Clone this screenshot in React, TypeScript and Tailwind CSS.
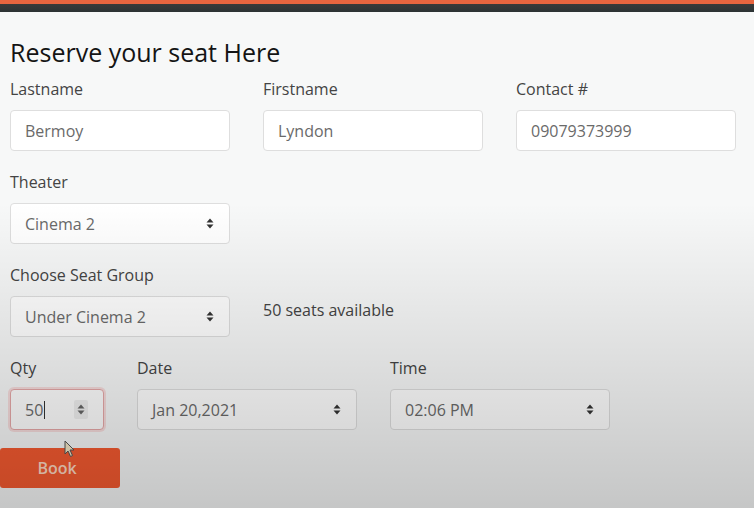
import React from "react";

const font = { fontFamily: '"Open Sans", "Noto Sans", Arial, sans-serif' };

function Arrows({ color = "#333" }: { color?: string }) {
  return (
    <svg width="8" height="11" viewBox="0 0 8 11" fill={color}>
      <path d="M4 0.5 L7.5 4.5 L0.5 4.5 Z" />
      <path d="M4 10.5 L7.5 6.5 L0.5 6.5 Z" />
    </svg>
  );
}

function TextBox({ value, w = "w-[220px]" }: { value: string; w?: string }) {
  return (
    <div
      className={`${w} h-[41px] bg-white border border-[#dedede] rounded-[4px] flex items-center pl-[14px] text-[16px] text-[#6a6a6a]`}
    >
      {value}
    </div>
  );
}

function SelectBox({ value, w = "w-[220px]" }: { value: string; w?: string }) {
  return (
    <div
      className={`${w} h-[41px] bg-white border border-[#dedede] rounded-[4px] flex items-center justify-between pl-[14px] pr-[15px] text-[16px] text-[#6a6a6a]`}
    >
      <span>{value}</span>
      <Arrows />
    </div>
  );
}

function Label({ children }: { children: React.ReactNode }) {
  return (
    <div className="h-[22px] leading-[22px] text-[16px] text-[#444] mb-[10px]">{children}</div>
  );
}

export default function App() {
  return (
    <div className="relative w-[754px] h-[508px] overflow-hidden bg-[#f7f8f8]" style={font}>
      <div className="h-[4px] bg-[#e8653f]" />
      <div className="h-[8px] bg-gradient-to-b from-[#3a3a3a] to-[#2c3334]" />
      <div className="pl-[10px] pt-[24px]">
        <h1 className="h-[32px] leading-[32px] text-[25px] text-[#141414] mb-[10px]">
          Reserve your seat Here
        </h1>

        <div className="flex gap-[33px] mb-[20px]">
          <div>
            <Label>Lastname</Label>
            <TextBox value="Bermoy" />
          </div>
          <div>
            <Label>Firstname</Label>
            <TextBox value="Lyndon" />
          </div>
          <div>
            <Label>Contact #</Label>
            <TextBox value="09079373999" />
          </div>
        </div>

        <div className="mb-[20px]">
          <Label>Theater</Label>
          <SelectBox value="Cinema 2" />
        </div>

        <div className="mb-[20px]">
          <Label>Choose Seat Group</Label>
          <div className="flex gap-[33px]">
            <SelectBox value="Under Cinema 2" />
            <div className="text-[16px] text-[#444] leading-[22px] pt-[3px]">50 seats available</div>
          </div>
        </div>

        <div className="flex gap-[33px] mb-[18px]">
          <div>
            <Label>Qty</Label>
            <div className="w-[94px] h-[41px] bg-white border border-[#e6a8a8] rounded-[4px] shadow-[0_0_0_2px_#f6dcdc] flex items-center pl-[14px] pr-[15px] justify-between text-[16px] text-[#6a6a6a]">
              <span className="flex items-center">
                50<span className="inline-block w-[1px] h-[18px] bg-[#333] ml-[1px]" />
              </span>
              <span className="bg-[#f0f0f0] px-[3px] py-[4px] rounded-[2px] flex">
                <Arrows color="#666" />
              </span>
            </div>
          </div>
          <div>
            <Label>Date</Label>
            <SelectBox value="Jan 20,2021" />
          </div>
          <div>
            <Label>Time</Label>
            <SelectBox value="02:06 PM" />
          </div>
        </div>
      </div>

      <button className="w-[120px] h-[40px] rounded-[3px] bg-[#f55a30] text-[#ffd9c4] text-[16px] font-semibold flex items-center justify-center pr-[6px]">
        Book
      </button>

      <svg
        className="absolute left-[64px] top-[440px] pointer-events-none"
        width="12"
        height="18"
        viewBox="0 0 12 18"
      >
        <path d="M1 1 L1 14 L4 11 L6.5 16.5 L8.5 15.5 L6 10 L10 10 Z" fill="#f3e7c7" stroke="#555" strokeWidth="1" />
      </svg>

      <div className="absolute inset-0 pointer-events-none bg-gradient-to-b from-transparent from-40% to-black/20" />
    </div>
  );
}
